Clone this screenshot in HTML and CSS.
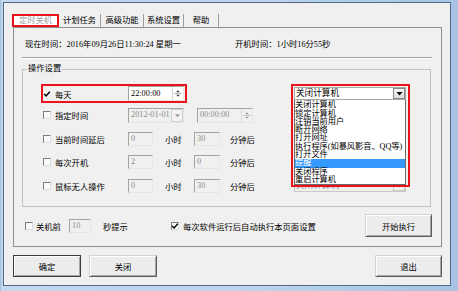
FILE: index.html
```html
<!DOCTYPE html>
<html lang="zh-CN">
<head>
<meta charset="utf-8">
<title>定时关机</title>
<link rel="stylesheet" href="styles.css">
</head>
<body>
<div class="window">
  <div class="client">
    <div class="tabs">
      <div class="tab sel">定时关机</div>
      <div class="tab w2">计划任务</div>
      <div class="tab w3">高级功能</div>
      <div class="tab w4">系统设置</div>
      <div class="tab w5">帮助</div>
    </div>
    <div class="panel">
      <div class="info"><span class="now">现在时间：2016年09月26日11:30:24 星期一</span><span>开机时间：1小时16分55秒</span></div>
      <div class="sep"></div>
      <fieldset class="group">
        <legend>操作设置</legend>
        <div class="rows">
          <div class="row">
            <div class="redbox">
              <span class="cb nobox"><svg width="8" height="8" viewBox="0 0 8 8"><path d="M1.2 4 L3.1 5.9 L6.8 1.8" stroke="#000" stroke-width="1.5" fill="none"/></svg></span>
              <span class="lbl">每天</span>
              <span class="field wide on"><span class="ftext">22:00:00</span><span class="spin"><svg width="11" height="13" viewBox="0 0 11 13"><path d="M3.5 5 L5.5 3 L7.5 5Z" fill="#333"/><line x1="1" y1="6.5" x2="10" y2="6.5" stroke="#b5b5b5"/><path d="M3.5 8 L5.5 10 L7.5 8Z" fill="#333"/></svg></span></span>
            </div>
            <div class="combo-wrap">
              <div class="combo"><span class="ctext">关闭计算机</span><span class="cbtn"><svg width="9" height="9" viewBox="0 0 9 9"><path d="M1.5 3 L7.5 3 L4.5 6.5Z" fill="#000"/></svg></span></div>
              <ul class="droplist">
                <li>关闭计算机</li>
                <li>锁定计算机</li>
                <li>注销当前用户</li>
                <li>断开网络</li>
                <li>打开网址</li>
                <li>执行程序(如暴风影音、QQ等)</li>
                <li>打开文件</li>
                <li class="hl">提醒</li>
                <li>关闭程序</li>
                <li>重启计算机</li>
              </ul>
              <div class="redframe"></div>
            </div>
          </div>
          <div class="row">
            <span class="cb"></span>
            <span class="lbl">指定时间</span>
            <span class="field wide"><span class="ftext">2012-01-01</span><span class="ddbtn"><svg width="9" height="9" viewBox="0 0 9 9"><path d="M2 3.5 L7 3.5 L4.5 6Z" fill="#8a8a8a"/></svg></span></span>
            <span class="field wide second"><span class="ftext">00:00:00</span><span class="spin"><svg width="11" height="13" viewBox="0 0 11 13"><path d="M3.5 5 L5.5 3 L7.5 5Z" fill="#9a9a9a"/><line x1="1" y1="6.5" x2="10" y2="6.5" stroke="#c5c5c5"/><path d="M3.5 8 L5.5 10 L7.5 8Z" fill="#9a9a9a"/></svg></span></span>
          </div>
          <div class="row">
            <span class="cb"></span>
            <span class="lbl">当前时间延后</span>
            <span class="field num">0</span>
            <span class="unit">小时</span>
            <span class="field num2">30</span>
            <span class="unit2">分钟后</span>
          </div>
          <div class="row">
            <span class="cb"></span>
            <span class="lbl">每次开机</span>
            <span class="field num">2</span>
            <span class="unit">小时</span>
            <span class="field num2">0</span>
            <span class="unit2">分钟后</span>
          </div>
          <div class="row">
            <span class="cb"></span>
            <span class="lbl">鼠标无人操作</span>
            <span class="field num">0</span>
            <span class="unit">小时</span>
            <span class="field num2">30</span>
            <span class="unit2">分钟后</span>
            <div class="combo off"><span class="ctext">关闭计算机</span><span class="cbtn"><svg width="9" height="9" viewBox="0 0 9 9"><path d="M1.5 3 L7.5 3 L4.5 6.5Z" fill="#9a9a9a"/></svg></span></div>
          </div>
        </div>
      </fieldset>
      <div class="opts">
        <span class="cb"></span>
        <span class="olbl">关机前</span>
        <span class="field sec">10</span>
        <span class="olbl2">秒提示</span>
        <span class="cb"><svg width="8" height="8" viewBox="0 0 8 8"><path d="M1.2 4 L3.1 5.9 L6.8 1.8" stroke="#000" stroke-width="1.4" fill="none"/></svg></span>
        <span class="olbl3">每次软件运行后自动执行本页面设置</span>
        <button class="btn start">开始执行</button>
      </div>
    </div>
    <div class="actions">
      <button class="btn def">确定</button>
      <button class="btn close">关闭</button>
      <button class="btn quit">退出</button>
    </div>
  </div>
</div>
</body>
</html>
```
FILE: styles.css
```css
* { box-sizing: border-box; }
html, body { margin: 0; padding: 0; }
body {
  font-family: "Liberation Serif", "Noto Sans CJK SC", serif;
  font-size: 8.3px;
  color: #000;
  background: #b5cce6;
}
.window {
  width: 458px;
  height: 291px;
  padding: 2px 7px 5px 3px;
  background: linear-gradient(90deg, #9fbbdc 0, #c4d8ee 2px, #bcd2ea 60%, #a8c3e2 100%);
}
.client {
  height: 100%;
  border: 1px solid #4f6b8c;
  background: #f0f0f0;
  padding: 9px 8px 0 9px;
}
.tabs {
  display: flex;
  align-items: flex-end;
  height: 15px;
  margin-left: -1px;
}
.tab {
  height: 13px;
  line-height: 13px;
  text-align: center;
  border-right: 1px solid #9c9c9c;
  white-space: nowrap;
}
.tab.sel {
  width: 47px;
  border: 2px solid #e8141c;
  background: #fff;
  color: #a0a0a0;
  line-height: 9px;
}
.w2 { width: 42px; }
.w3 { width: 43px; }
.w4 { width: 40px; }
.w5 { width: 35px; }
.panel {
  height: 220px;
  border: 1px solid #8e8f8f;
  padding: 0 9px 0 8px;
}
.info {
  height: 29px;
  display: flex;
  align-items: center;
  padding-left: 3px;
  white-space: nowrap;
}
.now { width: 210px; }
.sep {
  border-top: 1px solid #a0a0a0;
  border-bottom: 1px solid #fff;
}
.group {
  margin: 4px 1px 0 0;
  padding: 0 0 8px 0;
  border: 1px solid #c2c2c2;
  min-width: 0;
}
.group legend {
  margin-left: 4px;
  padding: 0 1px;
  line-height: 12px;
}
.rows { padding-top: 5px; }
.row {
  height: 23.5px;
  display: flex;
  align-items: center;
  padding: 0 24px 0 20px;
  white-space: nowrap;
}
.cb {
  flex: none;
  width: 8px;
  height: 8px;
  margin-right: 4px;
  border: 1px solid;
  border-color: #7c7c7c #dcdcdc #dcdcdc #7c7c7c;
  background: #fafafa;
  display: flex;
  align-items: center;
  justify-content: center;
}
.cb svg { display: block; flex: none; }
.cb.nobox { border-color: transparent; background: transparent; }
.lbl { width: 73px; flex: none; }
.redbox {
  display: flex;
  align-items: center;
  height: 19px;
  margin: 4px 0 0 -2px;
  border: 2px solid #e8141c;
  padding-right: 1px;
}
.field {
  flex: none;
  height: 14px;
  border: 1px solid;
  border-color: #a3a3a3 #e6e6e6 #e6e6e6 #a3a3a3;
  background: #f0f0f0;
  color: #8a8a8a;
  display: flex;
  align-items: center;
  padding-left: 2px;
  line-height: 12px;
}
.field.on { background: #fff; color: #000; }
.wide { width: 56px; height: 15px; padding-right: 0; }
.wide .ftext { flex: 1; }
.second { margin-left: 13px; }
.spin, .ddbtn {
  flex: none;
  width: 11px;
  height: 13px;
  border-left: 1px solid #d8d8d8;
  display: flex;
  align-items: center;
  justify-content: center;
}
.ddbtn {
  width: 12px;
  border: 1px solid #d0d0d0;
  background: #f4f4f4;
}
.spin svg, .ddbtn svg { display: block; }
.num { width: 25px; }
.num2 { width: 26px; margin-left: 12px; }
.unit { margin-left: 12px; width: 17px; }
.unit2 { margin-left: 10px; }
.combo-wrap {
  position: relative;
  margin-left: auto;
  margin-top: 4px;
  width: 112px;
  height: 13px;
}
.combo {
  width: 112px;
  height: 13px;
  border: 1px solid #a8a8a8;
  background: #fff;
  display: flex;
  align-items: center;
  padding-left: 1px;
  font-size: 8.6px;
}
.combo .ctext { flex: 1; line-height: 11px; }
.cbtn {
  flex: none;
  width: 12px;
  height: 11px;
  border: 1px solid #8a8a8a;
  background: linear-gradient(#f7f7f7, #dcdcdc);
  display: flex;
  align-items: center;
  justify-content: center;
}
.cbtn svg { display: block; }
.combo.off {
  margin-left: auto;
  background: #f0f0f0;
  color: #9a9a9a;
  border-color: #c8c8c8;
}
.combo.off .cbtn { border-color: #c8c8c8; background: #f2f2f2; }
.droplist {
  position: absolute;
  top: 13px;
  left: 0;
  width: 112px;
  height: 85px;
  margin: 0;
  padding: 1px 0 0;
  list-style: none;
  background: #fff;
  border: 1px solid #6a6a6a;
  border-top: none;
  font-size: 8.2px;
  line-height: 8.3px;
  overflow: hidden;
  white-space: nowrap;
}
.droplist li { height: 8.3px; padding-left: 0; }
.droplist li.hl { background: #3399ff; color: #fff; }
.redframe {
  position: absolute;
  top: -3px;
  left: -3px;
  width: 119px;
  height: 103px;
  border: 2px solid #e8141c;
  pointer-events: none;
}
.opts {
  display: flex;
  align-items: center;
  height: 24px;
  margin-top: 7px;
  padding-left: 3px;
  white-space: nowrap;
}
.opts .cb { margin-right: 3px; }
.olbl { width: 33px; }
.sec { width: 22px; }
.olbl2 { margin-left: 12px; width: 68px; }
.olbl3 { margin-left: 1px; }
.btn {
  font: inherit;
  color: #000;
  height: 23px;
  padding: 0;
  border: 1px solid;
  border-color: #d2d2d2 #5c5c5c #5c5c5c #d2d2d2;
  background: #ececec;
  box-shadow: inset 1px 1px 0 #fff, inset -1px -1px 0 #a6a6a6;
}
.start { margin-left: auto; width: 67px; }
.actions {
  display: flex;
  margin-top: 8px;
}
.actions .btn { height: 22px; }
.def {
  width: 68px;
  border-color: #3c3c3c;
}
.close { width: 68px; margin-left: 8px; }
.quit { width: 67px; margin-left: auto; }
```
